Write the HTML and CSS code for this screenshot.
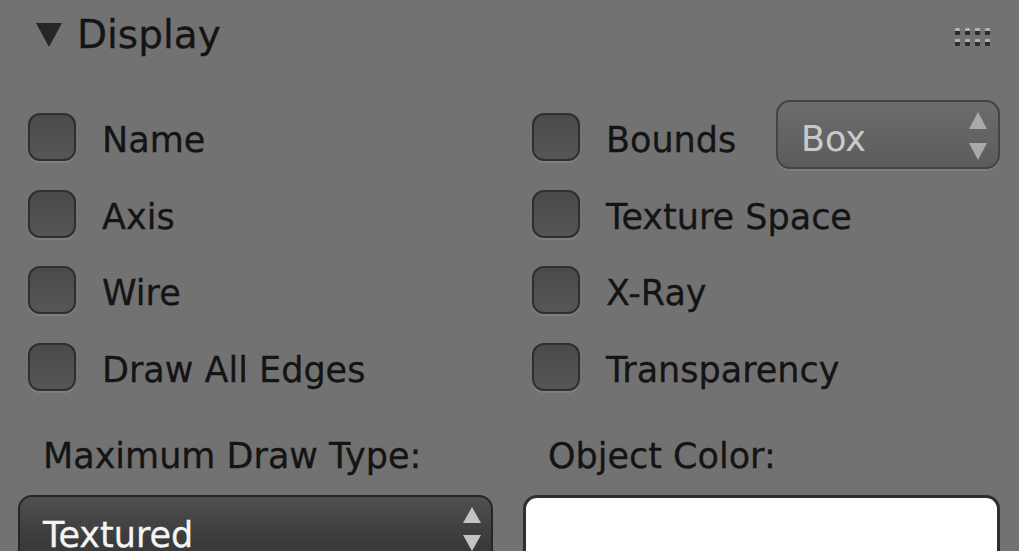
FILE: index.html
```html
<!DOCTYPE html>
<html>
<head>
<meta charset="utf-8">
<link rel="stylesheet" href="styles.css">
</head>
<body>
<div class="panel">
  <div class="header">
    <svg class="tri" width="28" height="28" viewBox="0 0 28 28"><polygon points="1,3 27,3 14,27" fill="#262626"/></svg>
    <span class="title">Display</span>
    <span class="grip">
      <i></i><i></i><i></i><i></i>
      <i></i><i></i><i></i><i></i>
    </span>
  </div>
  <div class="checks">
    <div class="item"><span class="cb"></span><span class="lbl">Name</span></div>
    <div class="item"><span class="cb"></span><span class="lbl">Bounds</span>
      <div class="menu light"><span>Box</span>
        <svg class="arrows" width="20" height="50" viewBox="0 0 20 50"><polygon points="10,1 19,18 1,18" fill="#a9a9a9"/><polygon points="1,32 19,32 10,49" fill="#a9a9a9"/></svg>
      </div>
    </div>
    <div class="item"><span class="cb"></span><span class="lbl">Axis</span></div>
    <div class="item"><span class="cb"></span><span class="lbl">Texture Space</span></div>
    <div class="item"><span class="cb"></span><span class="lbl">Wire</span></div>
    <div class="item"><span class="cb"></span><span class="lbl">X-Ray</span></div>
    <div class="item"><span class="cb"></span><span class="lbl">Draw All Edges</span></div>
    <div class="item"><span class="cb"></span><span class="lbl">Transparency</span></div>
  </div>
  <div class="bottom">
    <div class="col">
      <div class="cap">Maximum Draw Type:</div>
      <div class="menu dark"><span>Textured</span>
        <svg class="arrows" width="20" height="48" viewBox="0 0 20 48"><polygon points="10,2 19,18 1,18" fill="#c4c4c4"/><polygon points="1,30 19,30 10,46" fill="#c4c4c4"/></svg>
      </div>
    </div>
    <div class="col">
      <div class="cap">Object Color:</div>
      <div class="swatch"></div>
    </div>
  </div>
</div>
</body>
</html>
```
FILE: styles.css
```css
html, body {
  margin: 0;
  padding: 0;
  background: #727272;
  overflow: hidden;
}
body {
  width: 1019px;
  height: 551px;
  font-family: "DejaVu Sans", sans-serif;
  color: #141414;
}
.panel {
  display: flex;
  flex-direction: column;
}
.header {
  height: 72px;
  display: flex;
  align-items: center;
  padding-left: 35px;
  padding-right: 27px;
  margin-bottom: 27px;
}
.tri {
  margin-top: -4px;
}
.title {
  font-size: 39px;
  margin-left: 14px;
  margin-top: -3px;
  -webkit-text-stroke: 0.3px #141414;
}
.grip {
  margin-left: auto;
  display: grid;
  grid-template-columns: repeat(4, 5px);
  grid-auto-rows: 7px;
  column-gap: 5px;
  row-gap: 4px;
  margin-top: 2px;
  margin-right: 2px;
}
.grip i {
  display: block;
  width: 5px;
  height: 7px;
  background: linear-gradient(#b0b0b0 0 3px, #2c2c2c 3px 7px);
  border-radius: 1px;
}
.checks {
  display: grid;
  grid-template-columns: 504px 468px;
  grid-auto-rows: 76.5px;
  padding-left: 28px;
}
.item {
  display: flex;
  align-items: center;
}
.cb {
  width: 44px;
  height: 44px;
  border: 2px solid #2f2f2f;
  border-radius: 12px;
  background: linear-gradient(#4a4a4a, #565656);
  box-shadow: 0 2px 0 #808080;
  flex: none;
}
.lbl {
  font-size: 35px;
  margin-left: 26px;
  margin-top: 6px;
  -webkit-text-stroke: 0.3px #141414;
}
.menu {
  display: flex;
  align-items: center;
  box-sizing: border-box;
  border-radius: 14px;
  font-size: 35px;
  position: relative;
}
.menu.light {
  margin-left: auto;
  width: 224px;
  height: 69px;
  margin-top: -5px;
  border: 2px solid #444;
  background: linear-gradient(#6c6c6c, #5c5c5c);
  color: #cacaca;
  padding-left: 23px;
  padding-top: 8px;
  box-shadow: 0 2px 0 #7e7e7e;
}
.menu.dark {
  width: 475px;
  height: 80px;
  border: 2px solid #262626;
  background: linear-gradient(#505050, #3a3a3a 60%);
  color: #f4f4f4;
  padding-left: 23px;
  padding-top: 0;
  -webkit-text-stroke: 0.3px #f4f4f4;
}
.arrows {
  position: absolute;
  right: 10px;
  top: 9px;
}
.menu.dark .arrows {
  right: 9px;
  top: 8px;
}
.bottom {
  display: grid;
  grid-template-columns: 475px 477px;
  column-gap: 30px;
  padding-left: 18px;
  margin-top: 31px;
}
.cap {
  font-size: 35px;
  padding-left: 25px;
  height: 59px;
  -webkit-text-stroke: 0.3px #141414;
}
.swatch {
  height: 80px;
  box-sizing: border-box;
  border: 3px solid #2e2e2e;
  border-radius: 14px;
  background: #fff;
}
```
